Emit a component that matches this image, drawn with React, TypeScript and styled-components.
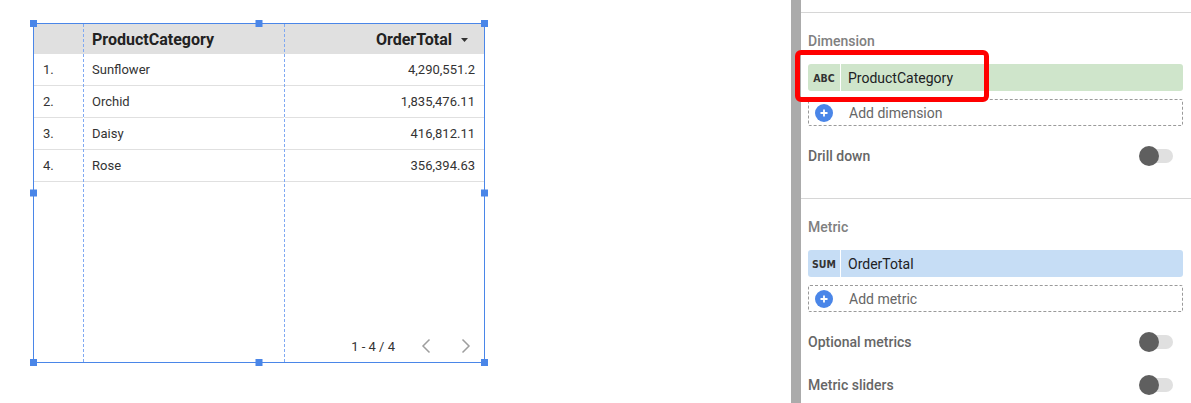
import React from 'react';
import styled, { createGlobalStyle } from 'styled-components';

const GlobalStyle = createGlobalStyle`
  html, body {
    margin: 0;
    padding: 0;
    background: #ffffff;
    font-family: Roboto, 'Liberation Sans', Arial, sans-serif;
  }
  * {
    box-sizing: border-box;
  }
`;

interface Row {
  category: string;
  total: string;
}

const rows: Row[] = [
  { category: 'Sunflower', total: '4,290,551.2' },
  { category: 'Orchid', total: '1,835,476.11' },
  { category: 'Daisy', total: '416,812.11' },
  { category: 'Rose', total: '356,394.63' },
];

const handles = ['tl', 'tc', 'tr', 'ml', 'mr', 'bl', 'bc', 'br'] as const;
type HandlePos = (typeof handles)[number];

const ChevronLeft = () => (
  <svg width='16' height='16' viewBox='0 0 16 16'>
    <polyline points='11.5,1.5 5,8 11.5,14.5' fill='none' stroke='#9e9e9e' strokeWidth='1.5' />
  </svg>
);

const ChevronRight = () => (
  <svg width='16' height='16' viewBox='0 0 16 16'>
    <polyline points='4.5,1.5 11,8 4.5,14.5' fill='none' stroke='#9e9e9e' strokeWidth='1.5' />
  </svg>
);

const SortArrow = () => (
  <svg width='7' height='4' viewBox='0 0 7 4'>
    <polygon points='0,0 7,0 3.5,4' fill='#333' />
  </svg>
);

const PlusBadge = () => (
  <PlusCircle>
    <svg width='10' height='10' viewBox='0 0 10 10'>
      <path d='M5 1.5v7M1.5 5h7' stroke='#fff' strokeWidth='1.8' />
    </svg>
  </PlusCircle>
);

export default function App() {
  return (
    <Page>
      <GlobalStyle />
      <Canvas>
        <Frame>
          <Column $width={49}>
            <HeaderCell />
            {rows.map((row, index) => (
              <BodyCell key={row.category}>{index + 1}.</BodyCell>
            ))}
          </Column>
          <Column $width={201} $dashed>
            <HeaderCell $pad='0 8px'>ProductCategory</HeaderCell>
            {rows.map(row => (
              <BodyCell key={row.category} $pad='0 8px'>
                {row.category}
              </BodyCell>
            ))}
          </Column>
          <Column $dashed $grow>
            <HeaderCell $align='right' $pad='0 16px 0 8px'>
              OrderTotal
              <SortArrowWrap>
                <SortArrow />
              </SortArrowWrap>
            </HeaderCell>
            {rows.map(row => (
              <BodyCell key={row.category} $align='right' $pad='0 9px 0 8px'>
                {row.total}
              </BodyCell>
            ))}
            <Pager>
              <PagerText>1 - 4 / 4</PagerText>
              <PagerButton>
                <ChevronLeft />
              </PagerButton>
              <PagerButton>
                <ChevronRight />
              </PagerButton>
            </Pager>
          </Column>
          {handles.map(pos => (
            <Handle key={pos} $pos={pos} />
          ))}
        </Frame>
      </Canvas>

      <Rail />

      <Panel>
        <TopStrip />
        <Section $divider>
          <SectionLabel>Dimension</SectionLabel>
          <FieldChip $color='#cfe5cb'>
            <FieldType>ABC</FieldType>
            <FieldName>ProductCategory</FieldName>
          </FieldChip>
          <AddBox>
            <PlusBadge />
            <AddText>Add dimension</AddText>
          </AddBox>
          <ToggleRow $gap={20}>
            <ToggleLabel>Drill down</ToggleLabel>
            <Toggle />
          </ToggleRow>
        </Section>
        <Section>
          <SectionLabel>Metric</SectionLabel>
          <FieldChip $color='#c6ddf5'>
            <FieldType>SUM</FieldType>
            <FieldName>OrderTotal</FieldName>
          </FieldChip>
          <AddBox>
            <PlusBadge />
            <AddText>Add metric</AddText>
          </AddBox>
          <ToggleRow $gap={20}>
            <ToggleLabel>Optional metrics</ToggleLabel>
            <Toggle />
          </ToggleRow>
          <ToggleRow $gap={23}>
            <ToggleLabel>Metric sliders</ToggleLabel>
            <Toggle />
          </ToggleRow>
        </Section>
        <Highlight />
      </Panel>
    </Page>
  );
}

const Page = styled.div`
  display: flex;
  width: 1191px;
  height: 403px;
  overflow: hidden;
  background: #fff;
`;

const Canvas = styled.div`
  width: 791px;
  flex: none;
  padding: 23px 0 0 33px;
`;

const Frame = styled.div`
  position: relative;
  display: flex;
  width: 452px;
  height: 340px;
  border: 1px solid #4a86e8;
  background: #fff;
`;

const Column = styled.div<{ $width?: number; $dashed?: boolean; $grow?: boolean }>`
  display: flex;
  flex-direction: column;
  width: ${p => (p.$width ? `${p.$width}px` : 'auto')};
  flex: ${p => (p.$grow ? '1' : 'none')};
  border-left: ${p => (p.$dashed ? '1px dashed #7fa9f2' : 'none')};
  background: linear-gradient(#e0e0e0 0 30px, #fff 30px);
`;

const HeaderCell = styled.div<{ $align?: 'left' | 'right'; $pad?: string }>`
  display: flex;
  flex: none;
  align-items: center;
  justify-content: ${p => (p.$align === 'right' ? 'flex-end' : 'flex-start')};
  height: 30px;
  padding: ${p => p.$pad || '0 9px'};
  background: #e0e0e0;
  font-size: 16px;
  font-weight: 700;
  color: #222;
  white-space: nowrap;
`;

const SortArrowWrap = styled.span`
  display: inline-flex;
  margin-left: 9px;
  margin-top: 1px;
`;

const BodyCell = styled.div<{ $align?: 'left' | 'right'; $pad?: string }>`
  display: flex;
  flex: none;
  align-items: center;
  justify-content: ${p => (p.$align === 'right' ? 'flex-end' : 'flex-start')};
  height: 32px;
  padding: ${p => p.$pad || '0 9px'};
  border-bottom: 1px solid #e0e0e0;
  font-size: 13px;
  color: #333;
  white-space: nowrap;
  background: #fff;
`;

const Pager = styled.div`
  margin-top: auto;
  height: 32px;
  display: flex;
  align-items: center;
  justify-content: flex-end;
  padding-right: 6px;
`;

const PagerText = styled.span`
  font-size: 13px;
  color: #333;
  margin-right: 19px;
`;

const PagerButton = styled.span`
  width: 24px;
  height: 24px;
  display: inline-flex;
  align-items: center;
  justify-content: center;
  & + & {
    margin-left: 16px;
  }
`;

const handleSpot: Record<HandlePos, string> = {
  tl: 'top: -4px; left: -4px;',
  tc: 'top: -4px; left: 50%; transform: translateX(-50%);',
  tr: 'top: -4px; right: -4px;',
  ml: 'top: 50%; left: -4px; transform: translateY(-50%);',
  mr: 'top: 50%; right: -4px; transform: translateY(-50%);',
  bl: 'bottom: -4px; left: -4px;',
  bc: 'bottom: -4px; left: 50%; transform: translateX(-50%);',
  br: 'bottom: -4px; right: -4px;',
};

const Handle = styled.span<{ $pos: HandlePos }>`
  position: absolute;
  width: 7px;
  height: 7px;
  background: #4a86e8;
  ${p => handleSpot[p.$pos]}
`;

const Rail = styled.div`
  width: 10px;
  flex: none;
  background: #ababab;
`;

const Panel = styled.div`
  position: relative;
  flex: 1;
  display: flex;
  flex-direction: column;
  background: #fff;
  & > * {
    flex-shrink: 0;
  }
`;

const TopStrip = styled.div`
  height: 13px;
  border-bottom: 1px solid #d6d6d6;
`;

const Section = styled.div<{ $divider?: boolean }>`
  display: flex;
  flex-direction: column;
  padding: 18px 8px 32px 7px;
  border-bottom: ${p => (p.$divider ? '1px solid #d6d6d6' : 'none')};
  & > * {
    flex-shrink: 0;
  }
`;

const SectionLabel = styled.div`
  height: 20px;
  line-height: 20px;
  font-size: 14px;
  font-weight: 500;
  color: #808080;
`;

const FieldChip = styled.div<{ $color: string }>`
  display: flex;
  align-items: stretch;
  height: 27px;
  margin-top: 13px;
  border-radius: 3px;
  background: ${p => p.$color};
  overflow: hidden;
`;

const FieldType = styled.span`
  width: 33px;
  display: flex;
  align-items: center;
  justify-content: center;
  border-right: 1px solid #fff;
  font-family: 'DejaVu Sans Condensed', 'DejaVu Sans', Roboto, sans-serif;
  font-size: 10.5px;
  font-weight: 700;
  color: #333;
`;

const FieldName = styled.span`
  display: flex;
  align-items: center;
  padding-left: 7px;
  font-size: 14px;
  color: #202124;
`;

const AddBox = styled.div`
  display: flex;
  align-items: center;
  height: 27px;
  margin-top: 8px;
  border: 1px dashed #9a9a9a;
  border-radius: 2px;
  padding-left: 6px;
`;

const PlusCircle = styled.span`
  width: 18px;
  height: 18px;
  border-radius: 50%;
  background: #4a86e8;
  display: inline-flex;
  align-items: center;
  justify-content: center;
`;

const AddText = styled.span`
  margin-left: 16px;
  font-size: 14px;
  color: #666;
`;

const ToggleRow = styled.div<{ $gap: number }>`
  display: flex;
  align-items: center;
  justify-content: space-between;
  height: 20px;
  margin-top: ${p => p.$gap}px;
  padding-right: 10px;
`;

const ToggleLabel = styled.span`
  font-size: 14px;
  font-weight: 500;
  color: #666;
`;

const Toggle = styled.span`
  position: relative;
  width: 34px;
  height: 20px;
  &::before {
    content: '';
    position: absolute;
    left: 6px;
    right: 0;
    top: 3px;
    height: 14px;
    border-radius: 7px;
    background: #e0e0e0;
  }
  &::after {
    content: '';
    position: absolute;
    left: 0;
    top: 0;
    width: 20px;
    height: 20px;
    border-radius: 50%;
    background: #5f5f5f;
  }
`;

const Highlight = styled.div`
  position: absolute;
  top: 50px;
  left: -6px;
  width: 194px;
  height: 52px;
  border: 5px solid #ff0000;
  border-radius: 6px;
  pointer-events: none;
`;
